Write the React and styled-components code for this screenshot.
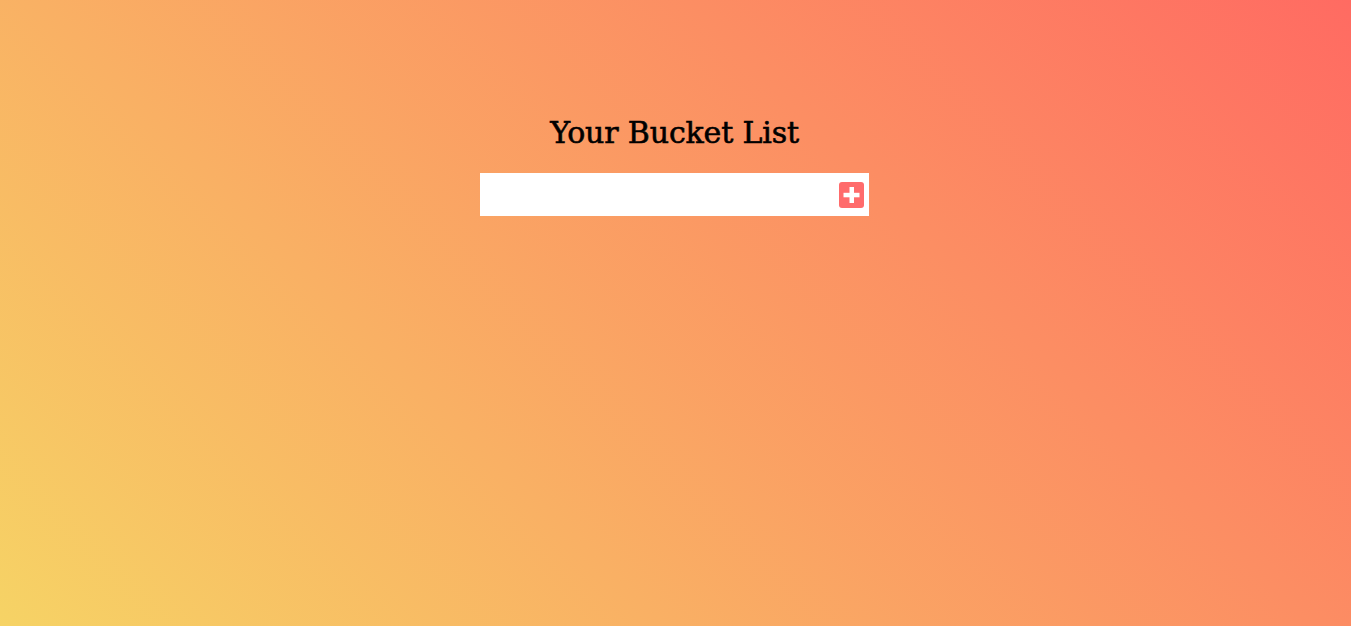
import React, { useState } from "react";
import styled, { createGlobalStyle } from "styled-components";

const Global = createGlobalStyle`
  html, body { margin: 0; padding: 0; height: 100%; }
  body { font-family: "DejaVu Serif", serif; }
  #root { height: 100%; }
`;

const Page = styled.main`
  min-height: 626px;
  height: 100%;
  box-sizing: border-box;
  background: linear-gradient(45deg, #f6d365 0%, #ff6b62 100%);
  display: flex;
  flex-direction: column;
  align-items: center;
  padding: 113px 2px 0 0;
`;

const Title = styled.h1`
  margin: 0 0 20px;
  font-family: "DejaVu Serif", serif;
  font-weight: 400;
  font-size: 30px;
  line-height: 40px;
  letter-spacing: -0.15px;
  color: #000;
  -webkit-text-stroke: 0.6px #000;
`;

const Form = styled.form`
  width: 389px;
  height: 43px;
  background: #fff;
  display: flex;
  align-items: center;
  box-sizing: border-box;
  padding: 0 5px 0 10px;
`;

const Input = styled.input`
  flex: 1;
  border: none;
  outline: none;
  font: 16px "Liberation Sans", sans-serif;
  background: transparent;
  height: 100%;
`;

const AddButton = styled.button`
  border: none;
  padding: 0;
  background: none;
  width: 25px;
  height: 26px;
  cursor: pointer;
  display: flex;
`;

function PlusSquare() {
  return (
    <svg width="25" height="26" viewBox="0 0 25 26">
      <rect x="0" y="0" width="25" height="26" rx="3" fill="#ff6b6b" />
      <rect x="10.5" y="5" width="4.5" height="16" fill="#fff" />
      <rect x="4.5" y="10.8" width="16" height="4.5" fill="#fff" />
    </svg>
  );
}

export default function App() {
  const [value, setValue] = useState("");
  return (
    <>
      <Global />
      <Page>
        <Title>Your Bucket List</Title>
        <Form onSubmit={(e) => e.preventDefault()}>
          <Input value={value} onChange={(e) => setValue(e.target.value)} />
          <AddButton type="submit" aria-label="Add">
            <PlusSquare />
          </AddButton>
        </Form>
      </Page>
    </>
  );
}
